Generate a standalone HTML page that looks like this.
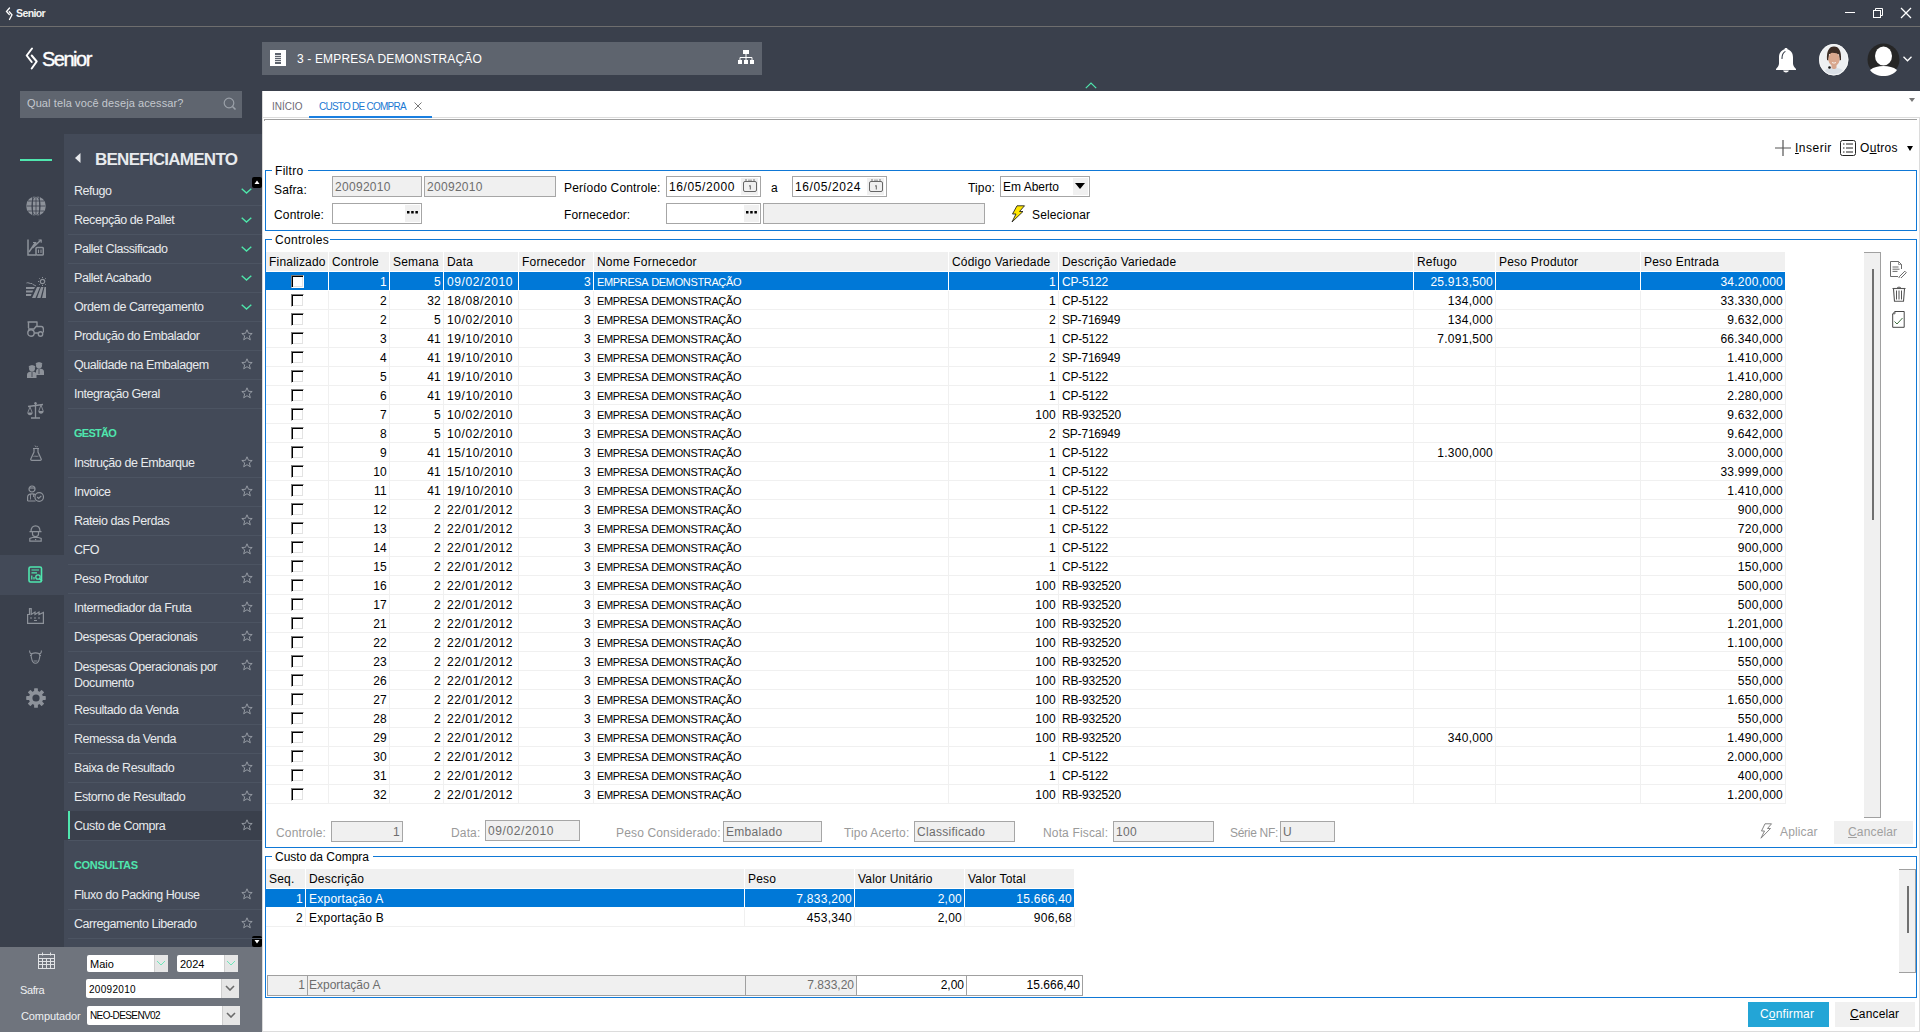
<!DOCTYPE html><html><head><meta charset="utf-8"><style>
*{box-sizing:border-box;margin:0;padding:0}
html,body{width:1920px;height:1032px;overflow:hidden}
body{background:#3a404c;font-family:"Liberation Sans",sans-serif;position:relative;color:#000}
.a{position:absolute}
.t{position:absolute;white-space:nowrap}
.mi{position:absolute;left:64px;width:198px;height:29px}
.mi:after{content:'';position:absolute;left:4px;right:0;bottom:-1px;height:1px;background:#4c5462}
.mi span{position:absolute;left:10px;top:8px;font-size:12.5px;letter-spacing:-0.45px;color:#e8eaed;white-space:nowrap}
.mi svg{position:absolute;right:10px;top:9px}
.mi svg.st{right:9px;top:8px}
.mi svg.ck{right:10px;top:12px}
.mh{position:absolute;left:74px;font-size:11px;font-weight:bold;color:#4fe6ae;letter-spacing:-0.75px;margin-top:1px}
.g{font-size:12px;line-height:18px}
.row{position:absolute;left:266px;width:1520px;height:19px}
.c{position:absolute;top:0;height:19px;border-right:1px solid #f0f0f0;border-bottom:1px solid #f0f0f0;white-space:nowrap;overflow:hidden;padding:1px 2px 0 3px;font-size:12px;line-height:18px;letter-spacing:0.25px}
.dt{letter-spacing:0.6px}
.em{font-size:11px;letter-spacing:-0.35px;word-spacing:0.8px}
.cp{letter-spacing:-0.2px}
.r{text-align:right}
.sel .c{background:#0078d7;color:#fff;border-right:1px solid #fff;border-bottom:1px solid #fff}
.hd{position:absolute;top:252px;height:19px;background:#f0f0f0;border-right:1px solid #fff;font-size:12px;line-height:19px;padding:1px 0 0 3px;white-space:nowrap;letter-spacing:0.2px}
.cb{position:absolute;left:25px;top:3px;width:13px;height:13px;background:#fff;border-top:1px solid #7a7a7a;border-left:1px solid #7a7a7a;border-right:1px solid #fff;border-bottom:1px solid #fff;box-shadow:inset 1px 1px 0 #000,inset -1px -1px 0 #e3e3e3}
.inp{position:absolute;border:1px solid #a6a6a6;height:21px;font-size:12px;line-height:19px;padding:1px 0 0 2px;white-space:nowrap;overflow:hidden;letter-spacing:0.3px}
.dg{letter-spacing:0.6px}
.dis{background:#f0f0f0;color:#6d6d6d}
.lbl{position:absolute;font-size:12px;white-space:nowrap;letter-spacing:0.15px}
.fr{position:absolute;border:1px solid #0f78d6}
.ft{position:absolute;background:#fff;font-size:12px;padding:0 3px;line-height:14px;white-space:nowrap;letter-spacing:0.3px}
.k0{left:0px;width:63px}.k1{left:63px;width:61px}.k2{left:124px;width:54px}.k3{left:178px;width:75px}.k4{left:253px;width:75px}.k5{left:328px;width:355px}.k6{left:683px;width:110px}.k7{left:793px;width:355px}.k8{left:1148px;width:82px}.k9{left:1230px;width:145px}.k10{left:1375px;width:145px}</style></head><body>
<svg class="a" style="left:5px;top:7px" width="9" height="14" viewBox="0 0 9 14"><path d="M4.5 1 L1.5 4.5 L4.3 7.5 M4.3 4.8 L7 7.8 L4.5 12.5" fill="none" stroke="#fff" stroke-width="1.3" stroke-linecap="round"/></svg>
<div class="t" style="left:16px;top:7px;font-size:10.5px;font-weight:bold;color:#f4f4f4;letter-spacing:-0.6px">Senior</div>
<div class="a" style="left:0;top:26px;width:1920px;height:1px;background:#6e6e6e"></div>
<div class="a" style="left:1845px;top:12px;width:10px;height:1px;background:#fff"></div>
<svg class="a" style="left:1872px;top:7px" width="12" height="12" viewBox="0 0 12 12"><rect x="1.5" y="3.5" width="7" height="7" fill="none" stroke="#fff"/><path d="M3.5 3.5 V1.5 H10.5 V8.5 H8.5" fill="none" stroke="#fff"/></svg>
<svg class="a" style="left:1900px;top:7px" width="12" height="12" viewBox="0 0 12 12"><path d="M1 1 L11 11 M11 1 L1 11" stroke="#fff" stroke-width="1.3"/></svg>
<svg class="a" style="left:24px;top:46px" width="16" height="26" viewBox="0 0 16 26"><path d="M8 2.5 L2.7 9.5 L7.7 16 M7.7 9.5 L12.7 15.5 L7.7 22.5" fill="none" stroke="#fff" stroke-width="2" stroke-linecap="round" stroke-linejoin="round"/></svg>
<div class="t" style="left:42px;top:48px;font-size:20px;color:#fff;letter-spacing:-1.5px;-webkit-text-stroke:0.4px #fff">Senior</div>
<div class="a" style="left:20px;top:91px;width:222px;height:27px;background:#5f656f"></div>
<div class="t" style="left:27px;top:97px;font-size:11px;color:#c4c8ce;letter-spacing:0.1px">Qual tela você deseja acessar?</div>
<svg class="a" style="left:223px;top:97px" width="14" height="14" viewBox="0 0 14 14"><circle cx="6" cy="6" r="4.8" fill="none" stroke="#9aa0a8" stroke-width="1.2"/><path d="M9.5 9.5 L12.5 12.5" stroke="#9aa0a8" stroke-width="1.6"/></svg>
<div class="a" style="left:262px;top:42px;width:500px;height:33px;background:#5e646e"></div>
<svg class="a" style="left:270px;top:50px" width="16" height="16" viewBox="0 0 16 16"><rect width="16" height="16" fill="#fff"/><rect x="5" y="3" width="6" height="11" fill="#5d636d"/><path d="M5 5.5H11M5 7.5H11M5 9.5H11M5 11.5H11" stroke="#fff" stroke-width="0.8"/></svg>
<div class="t" style="left:297px;top:52px;font-size:12px;color:#fff;letter-spacing:0.15px">3 - EMPRESA DEMONSTRAÇÃO</div>
<svg class="a" style="left:738px;top:50px" width="16" height="15" viewBox="0 0 16 15"><rect x="5" y="0" width="6" height="4" fill="#fff"/><path d="M8 4V7.5M2 7.5H14M2 7.5V10M8 7.5V10M14 7.5V10" stroke="#fff" stroke-width="1"/><rect x="0" y="10" width="4" height="4" fill="#fff"/><rect x="6" y="10" width="4" height="4" fill="#fff"/><rect x="12" y="10" width="4" height="4" fill="#fff"/></svg>
<svg class="a" style="left:1775px;top:47px" width="22" height="26" viewBox="0 0 22 26"><path d="M11 1C12 1 12.5 1.5 12.5 2.3C16 3.3 18 6.5 18 10.5L18 16.5C18 18.5 19.5 20.5 21 22L21 23L1 23L1 22C2.5 20.5 4 18.5 4 16.5L4 10.5C4 6.5 6 3.3 9.5 2.3C9.5 1.5 10 1 11 1Z" fill="#fff"/><path d="M8.2 23.5H13.8C13.8 24.6 12.6 25.4 11 25.4C9.4 25.4 8.2 24.6 8.2 23.5Z" fill="#fff"/><path d="M7 11.5C7 8 8 5.8 10 4.6" fill="none" stroke="#3a404c" stroke-width="1.1" stroke-linecap="round"/></svg>
<svg class="a" style="left:1819px;top:44px" width="30" height="32" viewBox="0 0 30 32"><defs><clipPath id="av"><ellipse cx="14.7" cy="15.7" rx="14.6" ry="15.6"/></clipPath></defs><g clip-path="url(#av)"><rect width="30" height="32" fill="#eef0f2"/><path d="M8 16C7.5 7 10 2.5 15 2.5C20 2.5 22.5 7 22 16L20.5 16.5L20 10H10L9.5 16.5Z" fill="#3d2d25"/><ellipse cx="15" cy="15" rx="5.6" ry="7.2" fill="#d9a78d"/><path d="M9.5 9C11 6 13 5.5 15.5 5.8C18.5 6 20 8 20.5 11C18.5 9 15 8.5 9.5 9Z" fill="#3d2d25"/><path d="M12.5 20H17.5V25H12.5Z" fill="#d6a68e"/><path d="M3 32C4 26 8 24.5 12.5 24C14 25.5 16 25.5 17.5 24C22 24.5 25.5 26 27 32Z" fill="#d9dfe6"/><circle cx="10.5" cy="23.5" r="1.3" fill="#1a1a1a"/><path d="M13 18.5Q15 19.8 17 18.5" stroke="#fff" stroke-width="0.8" fill="none"/></g><ellipse cx="14.7" cy="15.7" rx="14.3" ry="15.3" fill="none" stroke="#fafafa" stroke-width="0.8"/></svg>
<svg class="a" style="left:1867px;top:43px" width="33" height="33" viewBox="0 0 33 33"><circle cx="16.5" cy="16.5" r="16" fill="#262626"/><ellipse cx="16.5" cy="13" rx="8.5" ry="9.5" fill="#fff"/><path d="M3 27 C7 24 11 23 16.5 23 C22 23 26 24 30 27 C27 31 22 33 16.5 33 C11 33 6 31 3 27Z" fill="#fff"/></svg>
<svg class="a" style="left:1903px;top:56px" width="9" height="6" viewBox="0 0 9 6"><path d="M0.5 0.8 L4.5 4.8 L8.5 0.8" fill="none" stroke="#fff" stroke-width="1.3"/></svg>
<svg class="a" style="left:1085px;top:82px" width="12" height="7" viewBox="0 0 12 7"><path d="M0.8 6.2 L6 1 L11.2 6.2" fill="none" stroke="#4fe6ae" stroke-width="1.2"/></svg>
<div class="a" style="left:64px;top:134px;width:198px;height:813px;background:#434a58"></div>
<div class="a" style="left:20px;top:159px;width:32px;height:2px;background:#4fe6ae"></div>
<svg class="a" style="left:75px;top:153px" width="6" height="10" viewBox="0 0 6 10"><path d="M5.5 0 L0 5 L5.5 10Z" fill="#e8eaed"/></svg>
<div class="t" style="left:95px;top:150px;font-size:17px;font-weight:bold;color:#e8eaed;letter-spacing:-0.75px">BENEFICIAMENTO</div>
<div class="a" style="left:252px;top:177px;width:10px;height:11px;background:#000;border-radius:2px"></div><svg class="a" style="left:254px;top:179px" width="6" height="6"><path d="M0.5 5 L3 1.5 L5.5 5Z" fill="#fff"/></svg>
<div class="a" style="left:252px;top:936px;width:10px;height:11px;background:#000;border-radius:2px"></div><svg class="a" style="left:254px;top:939px" width="6" height="6"><path d="M0.5 1 L3 4.5 L5.5 1Z" fill="#fff"/></svg>
<div class="mi" style="top:176px;height:29px"><span>Refugo</span><svg class="ck" width="11" height="6" viewBox="0 0 11 6"><path d="M0.7 0.7 L5.5 5 L10.3 0.7" fill="none" stroke="#4ee6aa" stroke-width="1.4"/></svg></div>
<div class="mi" style="top:205px;height:29px"><span>Recepção de Pallet</span><svg class="ck" width="11" height="6" viewBox="0 0 11 6"><path d="M0.7 0.7 L5.5 5 L10.3 0.7" fill="none" stroke="#4ee6aa" stroke-width="1.4"/></svg></div>
<div class="mi" style="top:234px;height:29px"><span>Pallet Classificado</span><svg class="ck" width="11" height="6" viewBox="0 0 11 6"><path d="M0.7 0.7 L5.5 5 L10.3 0.7" fill="none" stroke="#4ee6aa" stroke-width="1.4"/></svg></div>
<div class="mi" style="top:263px;height:29px"><span>Pallet Acabado</span><svg class="ck" width="11" height="6" viewBox="0 0 11 6"><path d="M0.7 0.7 L5.5 5 L10.3 0.7" fill="none" stroke="#4ee6aa" stroke-width="1.4"/></svg></div>
<div class="mi" style="top:292px;height:29px"><span>Ordem de Carregamento</span><svg class="ck" width="11" height="6" viewBox="0 0 11 6"><path d="M0.7 0.7 L5.5 5 L10.3 0.7" fill="none" stroke="#4ee6aa" stroke-width="1.4"/></svg></div>
<div class="mi" style="top:321px;height:29px"><span>Produção do Embalador</span><svg class="st" width="12" height="12" viewBox="0 0 12 12"><path d="M6 0.8 L7.5 4.3 L11.2 4.5 L8.3 6.9 L9.3 10.8 L6 8.7 L2.7 10.8 L3.7 6.9 L0.8 4.5 L4.5 4.3Z" fill="none" stroke="#9ca1a9" stroke-width="0.9"/></svg></div>
<div class="mi" style="top:350px;height:29px"><span>Qualidade na Embalagem</span><svg class="st" width="12" height="12" viewBox="0 0 12 12"><path d="M6 0.8 L7.5 4.3 L11.2 4.5 L8.3 6.9 L9.3 10.8 L6 8.7 L2.7 10.8 L3.7 6.9 L0.8 4.5 L4.5 4.3Z" fill="none" stroke="#9ca1a9" stroke-width="0.9"/></svg></div>
<div class="mi" style="top:379px;height:29px"><span>Integração Geral</span><svg class="st" width="12" height="12" viewBox="0 0 12 12"><path d="M6 0.8 L7.5 4.3 L11.2 4.5 L8.3 6.9 L9.3 10.8 L6 8.7 L2.7 10.8 L3.7 6.9 L0.8 4.5 L4.5 4.3Z" fill="none" stroke="#9ca1a9" stroke-width="0.9"/></svg></div>
<div class="mh" style="top:426px">GESTÃO</div>
<div class="mi" style="top:448px;height:29px"><span>Instrução de Embarque</span><svg class="st" width="12" height="12" viewBox="0 0 12 12"><path d="M6 0.8 L7.5 4.3 L11.2 4.5 L8.3 6.9 L9.3 10.8 L6 8.7 L2.7 10.8 L3.7 6.9 L0.8 4.5 L4.5 4.3Z" fill="none" stroke="#9ca1a9" stroke-width="0.9"/></svg></div>
<div class="mi" style="top:477px;height:29px"><span>Invoice</span><svg class="st" width="12" height="12" viewBox="0 0 12 12"><path d="M6 0.8 L7.5 4.3 L11.2 4.5 L8.3 6.9 L9.3 10.8 L6 8.7 L2.7 10.8 L3.7 6.9 L0.8 4.5 L4.5 4.3Z" fill="none" stroke="#9ca1a9" stroke-width="0.9"/></svg></div>
<div class="mi" style="top:506px;height:29px"><span>Rateio das Perdas</span><svg class="st" width="12" height="12" viewBox="0 0 12 12"><path d="M6 0.8 L7.5 4.3 L11.2 4.5 L8.3 6.9 L9.3 10.8 L6 8.7 L2.7 10.8 L3.7 6.9 L0.8 4.5 L4.5 4.3Z" fill="none" stroke="#9ca1a9" stroke-width="0.9"/></svg></div>
<div class="mi" style="top:535px;height:29px"><span>CFO</span><svg class="st" width="12" height="12" viewBox="0 0 12 12"><path d="M6 0.8 L7.5 4.3 L11.2 4.5 L8.3 6.9 L9.3 10.8 L6 8.7 L2.7 10.8 L3.7 6.9 L0.8 4.5 L4.5 4.3Z" fill="none" stroke="#9ca1a9" stroke-width="0.9"/></svg></div>
<div class="mi" style="top:564px;height:29px"><span>Peso Produtor</span><svg class="st" width="12" height="12" viewBox="0 0 12 12"><path d="M6 0.8 L7.5 4.3 L11.2 4.5 L8.3 6.9 L9.3 10.8 L6 8.7 L2.7 10.8 L3.7 6.9 L0.8 4.5 L4.5 4.3Z" fill="none" stroke="#9ca1a9" stroke-width="0.9"/></svg></div>
<div class="mi" style="top:593px;height:29px"><span>Intermediador da Fruta</span><svg class="st" width="12" height="12" viewBox="0 0 12 12"><path d="M6 0.8 L7.5 4.3 L11.2 4.5 L8.3 6.9 L9.3 10.8 L6 8.7 L2.7 10.8 L3.7 6.9 L0.8 4.5 L4.5 4.3Z" fill="none" stroke="#9ca1a9" stroke-width="0.9"/></svg></div>
<div class="mi" style="top:622px;height:29px"><span>Despesas Operacionais</span><svg class="st" width="12" height="12" viewBox="0 0 12 12"><path d="M6 0.8 L7.5 4.3 L11.2 4.5 L8.3 6.9 L9.3 10.8 L6 8.7 L2.7 10.8 L3.7 6.9 L0.8 4.5 L4.5 4.3Z" fill="none" stroke="#9ca1a9" stroke-width="0.9"/></svg></div>
<div class="mi" style="top:651px;height:44px"><span style="line-height:16px;top:8px">Despesas Operacionais por<br>Documento</span><svg class="st" width="12" height="12" viewBox="0 0 12 12"><path d="M6 0.8 L7.5 4.3 L11.2 4.5 L8.3 6.9 L9.3 10.8 L6 8.7 L2.7 10.8 L3.7 6.9 L0.8 4.5 L4.5 4.3Z" fill="none" stroke="#9ca1a9" stroke-width="0.9"/></svg></div>
<div class="mi" style="top:695px;height:29px"><span>Resultado da Venda</span><svg class="st" width="12" height="12" viewBox="0 0 12 12"><path d="M6 0.8 L7.5 4.3 L11.2 4.5 L8.3 6.9 L9.3 10.8 L6 8.7 L2.7 10.8 L3.7 6.9 L0.8 4.5 L4.5 4.3Z" fill="none" stroke="#9ca1a9" stroke-width="0.9"/></svg></div>
<div class="mi" style="top:724px;height:29px"><span>Remessa da Venda</span><svg class="st" width="12" height="12" viewBox="0 0 12 12"><path d="M6 0.8 L7.5 4.3 L11.2 4.5 L8.3 6.9 L9.3 10.8 L6 8.7 L2.7 10.8 L3.7 6.9 L0.8 4.5 L4.5 4.3Z" fill="none" stroke="#9ca1a9" stroke-width="0.9"/></svg></div>
<div class="mi" style="top:753px;height:29px"><span>Baixa de Resultado</span><svg class="st" width="12" height="12" viewBox="0 0 12 12"><path d="M6 0.8 L7.5 4.3 L11.2 4.5 L8.3 6.9 L9.3 10.8 L6 8.7 L2.7 10.8 L3.7 6.9 L0.8 4.5 L4.5 4.3Z" fill="none" stroke="#9ca1a9" stroke-width="0.9"/></svg></div>
<div class="mi" style="top:782px;height:29px"><span>Estorno de Resultado</span><svg class="st" width="12" height="12" viewBox="0 0 12 12"><path d="M6 0.8 L7.5 4.3 L11.2 4.5 L8.3 6.9 L9.3 10.8 L6 8.7 L2.7 10.8 L3.7 6.9 L0.8 4.5 L4.5 4.3Z" fill="none" stroke="#9ca1a9" stroke-width="0.9"/></svg></div>
<div class="mi" style="top:811px;height:29px;background:#3a404c;border-bottom-color:#3a404c"><span>Custo de Compra</span><svg class="st" width="12" height="12" viewBox="0 0 12 12"><path d="M6 0.8 L7.5 4.3 L11.2 4.5 L8.3 6.9 L9.3 10.8 L6 8.7 L2.7 10.8 L3.7 6.9 L0.8 4.5 L4.5 4.3Z" fill="none" stroke="#9ca1a9" stroke-width="0.9"/></svg></div>
<div class="a" style="left:68px;top:811px;width:2px;height:28px;background:#4fe6ae"></div>
<div class="mh" style="top:858px;letter-spacing:-0.35px">CONSULTAS</div>
<div class="mi" style="top:880px;height:29px"><span>Fluxo do Packing House</span><svg class="st" width="12" height="12" viewBox="0 0 12 12"><path d="M6 0.8 L7.5 4.3 L11.2 4.5 L8.3 6.9 L9.3 10.8 L6 8.7 L2.7 10.8 L3.7 6.9 L0.8 4.5 L4.5 4.3Z" fill="none" stroke="#9ca1a9" stroke-width="0.9"/></svg></div>
<div class="mi" style="top:909px;height:29px"><span>Carregamento Liberado</span><svg class="st" width="12" height="12" viewBox="0 0 12 12"><path d="M6 0.8 L7.5 4.3 L11.2 4.5 L8.3 6.9 L9.3 10.8 L6 8.7 L2.7 10.8 L3.7 6.9 L0.8 4.5 L4.5 4.3Z" fill="none" stroke="#9ca1a9" stroke-width="0.9"/></svg></div>
<div class="a" style="left:0;top:555px;width:64px;height:40px;background:#434a58"></div>
<svg class="a" style="left:26px;top:196px" width="20" height="20" viewBox="0 0 20 20"><circle cx="10" cy="10" r="9.8" fill="#8d929a"/><g fill="none" stroke="#3a404c" stroke-width="0.8"><ellipse cx="10" cy="10" rx="4.2" ry="9.8"/><path d="M10 0V20M0.5 10H19.5M2 5H18M2 15H18M6.5 1V19M13.5 1V19"/></g></svg>
<svg class="a" style="left:27px;top:239px" width="17" height="17" viewBox="0 0 17 17"><g fill="none" stroke="#8d929a" stroke-width="1.5"><path d="M1 0.5V16H9"/><path d="M2 13L8.5 3.5M5.5 9L14 1"/><path d="M6 3.5H8.8V6.3M11.5 1H14.2V3.7" stroke-width="1.2"/><rect x="9" y="8.5" width="7.3" height="7.5" rx="1"/><path d="M11.5 14V10.5M14 10.5V14" stroke-width="1.1"/></g></svg>
<svg class="a" style="left:26px;top:277px" width="20" height="21" viewBox="0 0 20 21"><g fill="none" stroke="#8d929a"><circle cx="16.5" cy="4.5" r="2.2" stroke-width="1.2"/><path d="M16.5 0V1M16.5 8V9M12 4.5H13M20 4.5H21M13.3 1.3L14 2M19 7L19.7 7.7M13.3 7.7L14 7M19 2L19.7 1.3" stroke-width="1"/><path d="M0.5 6C2 5 4 7 6 6.5C7 8 8.5 8 10 9" stroke-width="1"/></g><g fill="#8d929a"><path d="M0 10H9L8 12H0Z M0 13.5H7.2L6.3 15.5H0Z M0 17H5.6L4.8 19H0Z"/><path d="M6 21L11 10H14L9.5 21Z M11 21L15 10H17.5L14.5 21Z M16 21L18.5 10H20V21Z"/></g></svg>
<svg class="a" style="left:27px;top:321px" width="17" height="16" viewBox="0 0 17 16"><g fill="none" stroke="#8d929a" stroke-width="1.4"><path d="M0.5 1H10.5M1.5 1V7M10 1V5.5"/><path d="M7 12H11M1 8H7L9 5.5H14.5C16 5.5 16.5 7 16.5 9V11.5"/><circle cx="4" cy="12" r="3.2"/><circle cx="13.5" cy="13" r="2.2"/></g></svg>
<svg class="a" style="left:27px;top:361px" width="17" height="17" viewBox="0 0 17 17"><g fill="#8d929a"><circle cx="5" cy="7.5" r="3"/><path d="M1.5 6.3C1.5 3.5 8.5 3.5 8.5 6.3Z"/><path d="M0 17V13.5C0 11.5 2 10.5 5 10.5C8 10.5 9.5 11.5 9.5 13.5V17Z"/><circle cx="12" cy="4.5" r="3"/><path d="M8.5 3.3C8.5 0.5 15.5 0.5 15.5 3.3Z"/><path d="M9 14V10.5C9 8.5 10 7.5 12 7.5C15 7.5 17 8.5 17 10.5V14Z"/></g><path d="M5 11V16M12 8V13" stroke="#3a404c" stroke-width="0.8"/></svg>
<svg class="a" style="left:27px;top:402px" width="17" height="17" viewBox="0 0 17 17"><g fill="none" stroke="#8d929a" stroke-width="1.3"><path d="M8.5 1V15.5M4 16H13M1 4.5L16 2.5"/><path d="M3 5L0.8 10.5M3 5L5.2 10.5M14 3L11.8 9M14 3L16.2 9" stroke-width="0.9"/></g><g fill="#8d929a"><path d="M0.3 10.5H5.7C5.5 12.5 4.5 13.2 3 13.2C1.5 13.2 0.5 12.5 0.3 10.5Z"/><path d="M11.3 9H16.7C16.5 11 15.5 11.7 14 11.7C12.5 11.7 11.5 11 11.3 9Z"/><rect x="7.3" y="0" width="2.4" height="2.4" rx="1.2"/></g></svg>
<svg class="a" style="left:30px;top:445px" width="12" height="16" viewBox="0 0 12 16"><g fill="none" stroke="#8d929a" stroke-width="1.2"><path d="M3 3.5H9M4 3.5V7L0.8 14C0.5 14.8 1 15.3 1.8 15.3H10.2C11 15.3 11.5 14.8 11.2 14L8 7V3.5"/><path d="M3.5 11.5C5 10.5 7 12 8.5 11" stroke-width="0.9"/><path d="M5 0.5L6 2M7.3 1L7 2.3" stroke-width="0.9"/></g></svg>
<svg class="a" style="left:27px;top:485px" width="17" height="17" viewBox="0 0 17 17"><g fill="none" stroke="#8d929a" stroke-width="1.2"><circle cx="5" cy="4" r="3"/><path d="M0.6 16V12C0.6 9.8 2.5 8.8 5 8.8C6.8 8.8 8 9.2 8.8 10M0.6 16H8.5"/><path d="M3.5 9V14.5M6.5 9V12" stroke-width="0.9"/><circle cx="12.2" cy="12" r="4.3"/><path d="M10.2 12L11.7 13.5L14.3 10.8"/></g><path d="M2 3H8" stroke="#8d929a" stroke-width="1.2"/></svg>
<svg class="a" style="left:29px;top:525px" width="13" height="17" viewBox="0 0 13 17"><g fill="none" stroke="#8d929a" stroke-width="1.2"><path d="M2 6.5C2 2.5 4 0.8 6.5 0.8C9 0.8 11 2.5 11 6.5M0.5 6.7H12.5"/><path d="M3.5 7V9C3.5 10.5 5 11.5 6.5 11.5C8 11.5 9.5 10.5 9.5 9V7"/><path d="M0.8 16.2V13.5L3.5 12.5H9.5L12.2 13.5V16.2Z"/></g><rect x="6" y="14" width="1.2" height="1.2" fill="#8d929a"/></svg>
<svg class="a" style="left:28px;top:566px" width="15" height="17" viewBox="0 0 15 17"><g fill="none" stroke="#4fe6ae" stroke-width="1.6"><rect x="1" y="1" width="12.5" height="15" rx="1.5"/><path d="M3.5 4H11M3.5 6.8H9" stroke-width="1.2"/><path d="M3.8 13.5V9.5M6 13.5V11" stroke-width="1.2"/><circle cx="10" cy="11" r="2.2" stroke-width="1.3"/><path d="M11.5 12.5L14 15" stroke-width="1.5"/></g></svg>
<svg class="a" style="left:27px;top:608px" width="17" height="16" viewBox="0 0 17 16"><g fill="none" stroke="#8d929a" stroke-width="1.2"><path d="M0.6 15.4V6.5H2.5V0.6H4.2V6.5L8 4V6.5L12 4V6.5L16.4 4.5V15.4Z"/><path d="M3 10H5M7 10H9M11 10H13M7 12.5H10" stroke-width="1"/></g></svg>
<svg class="a" style="left:29px;top:650px" width="13" height="14" viewBox="0 0 13 14"><g fill="none" stroke="#8d929a" stroke-width="1.1"><path d="M0.6 0.5C0.5 3 1.5 4 3.5 4M12.4 0.5C12.5 3 11.5 4 9.5 4"/><path d="M3 3.5C2 4 2 6 2.5 8C3 11 4.5 13.3 6.5 13.3C8.5 13.3 10 11 10.5 8C11 6 11 4 10 3.5C8 2.8 5 2.8 3 3.5Z"/><path d="M4.5 11H8.5" stroke-width="0.9"/><path d="M1 5.5H2.5M10.5 5.5H12" stroke-width="1"/></g></svg>
<svg class="a" style="left:26px;top:688px" width="20" height="20" viewBox="0 0 20 20"><g fill="#8d929a"><circle cx="10" cy="10" r="7.2"/><rect x="8.1" y="0.2" width="3.8" height="4" rx="0.6" transform="rotate(0 10 10)"/><rect x="8.1" y="0.2" width="3.8" height="4" rx="0.6" transform="rotate(45 10 10)"/><rect x="8.1" y="0.2" width="3.8" height="4" rx="0.6" transform="rotate(90 10 10)"/><rect x="8.1" y="0.2" width="3.8" height="4" rx="0.6" transform="rotate(135 10 10)"/><rect x="8.1" y="0.2" width="3.8" height="4" rx="0.6" transform="rotate(180 10 10)"/><rect x="8.1" y="0.2" width="3.8" height="4" rx="0.6" transform="rotate(225 10 10)"/><rect x="8.1" y="0.2" width="3.8" height="4" rx="0.6" transform="rotate(270 10 10)"/><rect x="8.1" y="0.2" width="3.8" height="4" rx="0.6" transform="rotate(315 10 10)"/></g><circle cx="10" cy="10" r="3.6" fill="#3a404c"/></svg>
<div class="a" style="left:0;top:947px;width:262px;height:85px;background:#6f747d"></div>
<svg class="a" style="left:38px;top:952px" width="17" height="17" viewBox="0 0 17 17"><rect x="0.5" y="2.5" width="16" height="14" fill="none" stroke="#e0e2e5"/><path d="M0.5 6.5H16.5M0.5 9.5H16.5M0.5 12.5H16.5M4.5 6.5V16.5M8.5 6.5V16.5M12.5 6.5V16.5M4.5 0.5V3.5M12.5 0.5V3.5" stroke="#e0e2e5"/></svg>
<div class="a" style="left:87px;top:955px;width:81px;height:17px;background:#fff;border-radius:2px"></div>
<div class="t" style="left:90px;top:958px;font-size:11px;color:#000">Maio</div>
<div class="a" style="left:154px;top:955px;width:14px;height:17px;background:#e6e6e6;border-left:1px solid #cfcfcf"></div>
<svg class="a" style="left:156px;top:960px" width="10" height="6" viewBox="0 0 10 6"><path d="M1 1L5 5L9 1" fill="none" stroke="#4fe6ae" stroke-width="0.8"/></svg>
<div class="a" style="left:177px;top:955px;width:61px;height:17px;background:#fff;border-radius:2px"></div>
<div class="t" style="left:180px;top:958px;font-size:11px;color:#000">2024</div>
<div class="a" style="left:224px;top:955px;width:14px;height:17px;background:#e6e6e6;border-left:1px solid #cfcfcf"></div>
<svg class="a" style="left:226px;top:960px" width="10" height="6" viewBox="0 0 10 6"><path d="M1 1L5 5L9 1" fill="none" stroke="#4fe6ae" stroke-width="0.8"/></svg>
<div class="a" style="left:86px;top:979px;width:153px;height:19px;background:#fff;border-radius:2px"></div>
<div class="t" style="left:89px;top:982px;font-size:11px;color:#000"><span style="font-size:10px;letter-spacing:0.3px;position:relative;top:1px">20092010</span></div>
<div class="a" style="left:221px;top:979px;width:18px;height:19px;background:#e6e6e6;border-left:1px solid #cfcfcf"></div>
<svg class="a" style="left:225px;top:985px" width="10" height="6" viewBox="0 0 10 6"><path d="M1 1L5 5L9 1" fill="none" stroke="#6a6a6a" stroke-width="1.6"/></svg>
<div class="a" style="left:87px;top:1006px;width:153px;height:19px;background:#fff;border-radius:2px"></div>
<div class="t" style="left:90px;top:1009px;font-size:11px;color:#000"><span style="font-size:10px;letter-spacing:-0.6px">NEO-DESENV02</span></div>
<div class="a" style="left:222px;top:1006px;width:18px;height:19px;background:#e6e6e6;border-left:1px solid #cfcfcf"></div>
<svg class="a" style="left:226px;top:1012px" width="10" height="6" viewBox="0 0 10 6"><path d="M1 1L5 5L9 1" fill="none" stroke="#6a6a6a" stroke-width="1.6"/></svg>
<div class="t" style="left:20px;top:984px;font-size:11px;color:#eef0f2;letter-spacing:-0.4px">Safra</div>
<div class="t" style="left:21px;top:1010px;font-size:11px;color:#eef0f2;letter-spacing:-0.1px">Computador</div>
<div class="a" style="left:262px;top:91px;width:1658px;height:941px;background:#fff"></div>
<div class="a" style="left:262px;top:91px;width:1px;height:941px;background:#d9d9d9"></div>
<div class="t" style="left:272px;top:101px;font-size:10px;color:#6e6a74;letter-spacing:0px">INÍCIO</div>
<div class="t" style="left:319px;top:101px;font-size:10px;color:#1a78d2;letter-spacing:-0.75px">CUSTO DE COMPRA</div>
<svg class="a" style="left:414px;top:102px" width="8" height="8" viewBox="0 0 8 8"><path d="M0.5 0.5L7.5 7.5M7.5 0.5L0.5 7.5" stroke="#777" stroke-width="1"/></svg>
<div class="a" style="left:263px;top:117px;width:1657px;height:1px;background:#dcdcdc"></div>
<div class="a" style="left:309px;top:116px;width:123px;height:2px;background:#1a7fe0"></div>
<div class="a" style="left:1909px;top:98px;width:0;height:0;border-left:3.5px solid transparent;border-right:3.5px solid transparent;border-top:4px solid #777"></div>
<div class="a" style="left:264px;top:119px;width:1653px;height:1px;background:#a0a0a0"></div>
<div class="a" style="left:264px;top:119px;width:1px;height:2px;background:#a0a0a0"></div>
<div class="a" style="left:1919px;top:117px;width:1px;height:915px;background:#dcdcdc"></div>
<svg class="a" style="left:1775px;top:140px" width="16" height="16" viewBox="0 0 16 16"><path d="M8 0V16M0 8H16" stroke="#555" stroke-width="1.2"/></svg>
<div class="t" style="left:1795px;top:141px;font-size:12px;color:#000;letter-spacing:0.5px"><u>I</u>nserir</div>
<svg class="a" style="left:1840px;top:140px" width="16" height="16" viewBox="0 0 16 16"><rect x="0.5" y="0.5" width="15" height="15" rx="2" fill="none" stroke="#222"/><path d="M3 4H4.5M3 8H4.5M3 12H4.5M6 4H13M6 8H13M6 12H13" stroke="#222"/></svg>
<div class="t" style="left:1860px;top:141px;font-size:12px;color:#000;letter-spacing:0.3px">O<u>u</u>tros</div>
<div class="a" style="left:1907px;top:146px;width:0;height:0;border-left:3.5px solid transparent;border-right:3.5px solid transparent;border-top:5px solid #000"></div>
<div class="fr" style="left:265px;top:170px;width:1652px;height:61px"></div>
<div class="ft" style="left:272px;top:164px;width:36px;letter-spacing:0.3px">Filtro</div>
<div class="lbl" style="left:274px;top:183px">Safra:</div>
<div class="inp dis" style="left:332px;top:176px;width:90px">20092010</div>
<div class="inp dis" style="left:424px;top:176px;width:132px">20092010</div>
<div class="lbl" style="left:274px;top:208px">Controle:</div>
<div class="inp" style="left:332px;top:203px;width:90px"></div>
<div class="a" style="left:405px;top:205px;width:15px;height:17px;background:#f0f0f0"></div>
<svg class="a" style="left:407px;top:211px" width="11" height="3"><rect x="0" y="0" width="2.5" height="2.5" fill="#000"/><rect x="4.2" y="0" width="2.5" height="2.5" fill="#000"/><rect x="8.4" y="0" width="2.5" height="2.5" fill="#000"/></svg>
<div class="lbl" style="left:564px;top:181px">Período Controle:</div>
<div class="inp dg" style="left:666px;top:176px;width:95px">16/05/2000</div>
<div class="a" style="left:741px;top:178px;width:17px;height:17px;background:#f0f0f0"></div>
<svg class="a" style="left:743px;top:179px" width="14" height="13" viewBox="0 0 14 13"><rect x="0.5" y="2.5" width="13" height="10" rx="1.5" fill="none" stroke="#666"/><path d="M3 0V2M6 0.5V2M8 0.5V2M11 0V2" stroke="#777" stroke-width="1"/><path d="M6 7.2L7.3 6.5V10.5" stroke="#555" stroke-width="0.9" fill="none"/></svg>
<div class="lbl" style="left:771px;top:181px">a</div>
<div class="inp dg" style="left:792px;top:176px;width:95px">16/05/2024</div>
<div class="a" style="left:867px;top:178px;width:17px;height:17px;background:#f0f0f0"></div>
<svg class="a" style="left:869px;top:179px" width="14" height="13" viewBox="0 0 14 13"><rect x="0.5" y="2.5" width="13" height="10" rx="1.5" fill="none" stroke="#666"/><path d="M3 0V2M6 0.5V2M8 0.5V2M11 0V2" stroke="#777" stroke-width="1"/><path d="M6 7.2L7.3 6.5V10.5" stroke="#555" stroke-width="0.9" fill="none"/></svg>
<div class="lbl" style="left:968px;top:181px">Tipo:</div>
<div class="inp" style="left:1000px;top:176px;width:90px;letter-spacing:0">Em Aberto</div>
<div class="a" style="left:1073px;top:178px;width:15px;height:17px;background:#f0f0f0"></div>
<div class="a" style="left:1075px;top:183px;width:0;height:0;border-left:5px solid transparent;border-right:5px solid transparent;border-top:6px solid #000"></div>
<div class="lbl" style="left:564px;top:208px">Fornecedor:</div>
<div class="inp" style="left:666px;top:203px;width:95px"></div>
<div class="a" style="left:744px;top:205px;width:15px;height:17px;background:#f0f0f0"></div>
<svg class="a" style="left:746px;top:211px" width="11" height="3"><rect x="0" y="0" width="2.5" height="2.5" fill="#000"/><rect x="4.2" y="0" width="2.5" height="2.5" fill="#000"/><rect x="8.4" y="0" width="2.5" height="2.5" fill="#000"/></svg>
<div class="inp dis" style="left:763px;top:203px;width:222px"></div>
<svg class="a" style="left:1010px;top:205px" width="16" height="18" viewBox="0 0 16 18"><path d="M7 0.8 L14.5 0.8 L9.5 6.5 L13 6.5 L2 17 L6 9 L2.5 9Z" fill="#ffe600" stroke="#222" stroke-width="0.9" stroke-linejoin="round"/></svg>
<div class="lbl" style="left:1032px;top:208px">Selecionar</div>
<div class="fr" style="left:265px;top:239px;width:1652px;height:609px"></div>
<div class="ft" style="left:272px;top:233px;width:58px;letter-spacing:0.3px">Controles</div>
<div class="hd" style="left:266px;width:63px">Finalizado</div>
<div class="hd" style="left:329px;width:61px">Controle</div>
<div class="hd" style="left:390px;width:54px">Semana</div>
<div class="hd" style="left:444px;width:75px">Data</div>
<div class="hd" style="left:519px;width:75px">Fornecedor</div>
<div class="hd" style="left:594px;width:355px">Nome Fornecedor</div>
<div class="hd" style="left:949px;width:110px">Código Variedade</div>
<div class="hd" style="left:1059px;width:355px">Descrição Variedade</div>
<div class="hd" style="left:1414px;width:82px">Refugo</div>
<div class="hd" style="left:1496px;width:145px">Peso Produtor</div>
<div class="hd" style="left:1641px;width:145px">Peso Entrada</div>
<div class="row sel" style="top:272px"><div class="c k0 "><div class="cb"></div></div><div class="c k1 r">1</div><div class="c k2 r">5</div><div class="c k3 dt">09/02/2010</div><div class="c k4 r">3</div><div class="c k5 em">EMPRESA DEMONSTRAÇÃO</div><div class="c k6 r">1</div><div class="c k7 cp">CP-5122</div><div class="c k8 r">25.913,500</div><div class="c k9 r"></div><div class="c k10 r">34.200,000</div></div>
<div class="row" style="top:291px"><div class="c k0 "><div class="cb"></div></div><div class="c k1 r">2</div><div class="c k2 r">32</div><div class="c k3 dt">18/08/2010</div><div class="c k4 r">3</div><div class="c k5 em">EMPRESA DEMONSTRAÇÃO</div><div class="c k6 r">1</div><div class="c k7 cp">CP-5122</div><div class="c k8 r">134,000</div><div class="c k9 r"></div><div class="c k10 r">33.330,000</div></div>
<div class="row" style="top:310px"><div class="c k0 "><div class="cb"></div></div><div class="c k1 r">2</div><div class="c k2 r">5</div><div class="c k3 dt">10/02/2010</div><div class="c k4 r">3</div><div class="c k5 em">EMPRESA DEMONSTRAÇÃO</div><div class="c k6 r">2</div><div class="c k7 cp">SP-716949</div><div class="c k8 r">134,000</div><div class="c k9 r"></div><div class="c k10 r">9.632,000</div></div>
<div class="row" style="top:329px"><div class="c k0 "><div class="cb"></div></div><div class="c k1 r">3</div><div class="c k2 r">41</div><div class="c k3 dt">19/10/2010</div><div class="c k4 r">3</div><div class="c k5 em">EMPRESA DEMONSTRAÇÃO</div><div class="c k6 r">1</div><div class="c k7 cp">CP-5122</div><div class="c k8 r">7.091,500</div><div class="c k9 r"></div><div class="c k10 r">66.340,000</div></div>
<div class="row" style="top:348px"><div class="c k0 "><div class="cb"></div></div><div class="c k1 r">4</div><div class="c k2 r">41</div><div class="c k3 dt">19/10/2010</div><div class="c k4 r">3</div><div class="c k5 em">EMPRESA DEMONSTRAÇÃO</div><div class="c k6 r">2</div><div class="c k7 cp">SP-716949</div><div class="c k8 r"></div><div class="c k9 r"></div><div class="c k10 r">1.410,000</div></div>
<div class="row" style="top:367px"><div class="c k0 "><div class="cb"></div></div><div class="c k1 r">5</div><div class="c k2 r">41</div><div class="c k3 dt">19/10/2010</div><div class="c k4 r">3</div><div class="c k5 em">EMPRESA DEMONSTRAÇÃO</div><div class="c k6 r">1</div><div class="c k7 cp">CP-5122</div><div class="c k8 r"></div><div class="c k9 r"></div><div class="c k10 r">1.410,000</div></div>
<div class="row" style="top:386px"><div class="c k0 "><div class="cb"></div></div><div class="c k1 r">6</div><div class="c k2 r">41</div><div class="c k3 dt">19/10/2010</div><div class="c k4 r">3</div><div class="c k5 em">EMPRESA DEMONSTRAÇÃO</div><div class="c k6 r">1</div><div class="c k7 cp">CP-5122</div><div class="c k8 r"></div><div class="c k9 r"></div><div class="c k10 r">2.280,000</div></div>
<div class="row" style="top:405px"><div class="c k0 "><div class="cb"></div></div><div class="c k1 r">7</div><div class="c k2 r">5</div><div class="c k3 dt">10/02/2010</div><div class="c k4 r">3</div><div class="c k5 em">EMPRESA DEMONSTRAÇÃO</div><div class="c k6 r">100</div><div class="c k7 cp">RB-932520</div><div class="c k8 r"></div><div class="c k9 r"></div><div class="c k10 r">9.632,000</div></div>
<div class="row" style="top:424px"><div class="c k0 "><div class="cb"></div></div><div class="c k1 r">8</div><div class="c k2 r">5</div><div class="c k3 dt">10/02/2010</div><div class="c k4 r">3</div><div class="c k5 em">EMPRESA DEMONSTRAÇÃO</div><div class="c k6 r">2</div><div class="c k7 cp">SP-716949</div><div class="c k8 r"></div><div class="c k9 r"></div><div class="c k10 r">9.642,000</div></div>
<div class="row" style="top:443px"><div class="c k0 "><div class="cb"></div></div><div class="c k1 r">9</div><div class="c k2 r">41</div><div class="c k3 dt">15/10/2010</div><div class="c k4 r">3</div><div class="c k5 em">EMPRESA DEMONSTRAÇÃO</div><div class="c k6 r">1</div><div class="c k7 cp">CP-5122</div><div class="c k8 r">1.300,000</div><div class="c k9 r"></div><div class="c k10 r">3.000,000</div></div>
<div class="row" style="top:462px"><div class="c k0 "><div class="cb"></div></div><div class="c k1 r">10</div><div class="c k2 r">41</div><div class="c k3 dt">15/10/2010</div><div class="c k4 r">3</div><div class="c k5 em">EMPRESA DEMONSTRAÇÃO</div><div class="c k6 r">1</div><div class="c k7 cp">CP-5122</div><div class="c k8 r"></div><div class="c k9 r"></div><div class="c k10 r">33.999,000</div></div>
<div class="row" style="top:481px"><div class="c k0 "><div class="cb"></div></div><div class="c k1 r">11</div><div class="c k2 r">41</div><div class="c k3 dt">19/10/2010</div><div class="c k4 r">3</div><div class="c k5 em">EMPRESA DEMONSTRAÇÃO</div><div class="c k6 r">1</div><div class="c k7 cp">CP-5122</div><div class="c k8 r"></div><div class="c k9 r"></div><div class="c k10 r">1.410,000</div></div>
<div class="row" style="top:500px"><div class="c k0 "><div class="cb"></div></div><div class="c k1 r">12</div><div class="c k2 r">2</div><div class="c k3 dt">22/01/2012</div><div class="c k4 r">3</div><div class="c k5 em">EMPRESA DEMONSTRAÇÃO</div><div class="c k6 r">1</div><div class="c k7 cp">CP-5122</div><div class="c k8 r"></div><div class="c k9 r"></div><div class="c k10 r">900,000</div></div>
<div class="row" style="top:519px"><div class="c k0 "><div class="cb"></div></div><div class="c k1 r">13</div><div class="c k2 r">2</div><div class="c k3 dt">22/01/2012</div><div class="c k4 r">3</div><div class="c k5 em">EMPRESA DEMONSTRAÇÃO</div><div class="c k6 r">1</div><div class="c k7 cp">CP-5122</div><div class="c k8 r"></div><div class="c k9 r"></div><div class="c k10 r">720,000</div></div>
<div class="row" style="top:538px"><div class="c k0 "><div class="cb"></div></div><div class="c k1 r">14</div><div class="c k2 r">2</div><div class="c k3 dt">22/01/2012</div><div class="c k4 r">3</div><div class="c k5 em">EMPRESA DEMONSTRAÇÃO</div><div class="c k6 r">1</div><div class="c k7 cp">CP-5122</div><div class="c k8 r"></div><div class="c k9 r"></div><div class="c k10 r">900,000</div></div>
<div class="row" style="top:557px"><div class="c k0 "><div class="cb"></div></div><div class="c k1 r">15</div><div class="c k2 r">2</div><div class="c k3 dt">22/01/2012</div><div class="c k4 r">3</div><div class="c k5 em">EMPRESA DEMONSTRAÇÃO</div><div class="c k6 r">1</div><div class="c k7 cp">CP-5122</div><div class="c k8 r"></div><div class="c k9 r"></div><div class="c k10 r">150,000</div></div>
<div class="row" style="top:576px"><div class="c k0 "><div class="cb"></div></div><div class="c k1 r">16</div><div class="c k2 r">2</div><div class="c k3 dt">22/01/2012</div><div class="c k4 r">3</div><div class="c k5 em">EMPRESA DEMONSTRAÇÃO</div><div class="c k6 r">100</div><div class="c k7 cp">RB-932520</div><div class="c k8 r"></div><div class="c k9 r"></div><div class="c k10 r">500,000</div></div>
<div class="row" style="top:595px"><div class="c k0 "><div class="cb"></div></div><div class="c k1 r">17</div><div class="c k2 r">2</div><div class="c k3 dt">22/01/2012</div><div class="c k4 r">3</div><div class="c k5 em">EMPRESA DEMONSTRAÇÃO</div><div class="c k6 r">100</div><div class="c k7 cp">RB-932520</div><div class="c k8 r"></div><div class="c k9 r"></div><div class="c k10 r">500,000</div></div>
<div class="row" style="top:614px"><div class="c k0 "><div class="cb"></div></div><div class="c k1 r">21</div><div class="c k2 r">2</div><div class="c k3 dt">22/01/2012</div><div class="c k4 r">3</div><div class="c k5 em">EMPRESA DEMONSTRAÇÃO</div><div class="c k6 r">100</div><div class="c k7 cp">RB-932520</div><div class="c k8 r"></div><div class="c k9 r"></div><div class="c k10 r">1.201,000</div></div>
<div class="row" style="top:633px"><div class="c k0 "><div class="cb"></div></div><div class="c k1 r">22</div><div class="c k2 r">2</div><div class="c k3 dt">22/01/2012</div><div class="c k4 r">3</div><div class="c k5 em">EMPRESA DEMONSTRAÇÃO</div><div class="c k6 r">100</div><div class="c k7 cp">RB-932520</div><div class="c k8 r"></div><div class="c k9 r"></div><div class="c k10 r">1.100,000</div></div>
<div class="row" style="top:652px"><div class="c k0 "><div class="cb"></div></div><div class="c k1 r">23</div><div class="c k2 r">2</div><div class="c k3 dt">22/01/2012</div><div class="c k4 r">3</div><div class="c k5 em">EMPRESA DEMONSTRAÇÃO</div><div class="c k6 r">100</div><div class="c k7 cp">RB-932520</div><div class="c k8 r"></div><div class="c k9 r"></div><div class="c k10 r">550,000</div></div>
<div class="row" style="top:671px"><div class="c k0 "><div class="cb"></div></div><div class="c k1 r">26</div><div class="c k2 r">2</div><div class="c k3 dt">22/01/2012</div><div class="c k4 r">3</div><div class="c k5 em">EMPRESA DEMONSTRAÇÃO</div><div class="c k6 r">100</div><div class="c k7 cp">RB-932520</div><div class="c k8 r"></div><div class="c k9 r"></div><div class="c k10 r">550,000</div></div>
<div class="row" style="top:690px"><div class="c k0 "><div class="cb"></div></div><div class="c k1 r">27</div><div class="c k2 r">2</div><div class="c k3 dt">22/01/2012</div><div class="c k4 r">3</div><div class="c k5 em">EMPRESA DEMONSTRAÇÃO</div><div class="c k6 r">100</div><div class="c k7 cp">RB-932520</div><div class="c k8 r"></div><div class="c k9 r"></div><div class="c k10 r">1.650,000</div></div>
<div class="row" style="top:709px"><div class="c k0 "><div class="cb"></div></div><div class="c k1 r">28</div><div class="c k2 r">2</div><div class="c k3 dt">22/01/2012</div><div class="c k4 r">3</div><div class="c k5 em">EMPRESA DEMONSTRAÇÃO</div><div class="c k6 r">100</div><div class="c k7 cp">RB-932520</div><div class="c k8 r"></div><div class="c k9 r"></div><div class="c k10 r">550,000</div></div>
<div class="row" style="top:728px"><div class="c k0 "><div class="cb"></div></div><div class="c k1 r">29</div><div class="c k2 r">2</div><div class="c k3 dt">22/01/2012</div><div class="c k4 r">3</div><div class="c k5 em">EMPRESA DEMONSTRAÇÃO</div><div class="c k6 r">100</div><div class="c k7 cp">RB-932520</div><div class="c k8 r">340,000</div><div class="c k9 r"></div><div class="c k10 r">1.490,000</div></div>
<div class="row" style="top:747px"><div class="c k0 "><div class="cb"></div></div><div class="c k1 r">30</div><div class="c k2 r">2</div><div class="c k3 dt">22/01/2012</div><div class="c k4 r">3</div><div class="c k5 em">EMPRESA DEMONSTRAÇÃO</div><div class="c k6 r">1</div><div class="c k7 cp">CP-5122</div><div class="c k8 r"></div><div class="c k9 r"></div><div class="c k10 r">2.000,000</div></div>
<div class="row" style="top:766px"><div class="c k0 "><div class="cb"></div></div><div class="c k1 r">31</div><div class="c k2 r">2</div><div class="c k3 dt">22/01/2012</div><div class="c k4 r">3</div><div class="c k5 em">EMPRESA DEMONSTRAÇÃO</div><div class="c k6 r">1</div><div class="c k7 cp">CP-5122</div><div class="c k8 r"></div><div class="c k9 r"></div><div class="c k10 r">400,000</div></div>
<div class="row" style="top:785px"><div class="c k0 "><div class="cb"></div></div><div class="c k1 r">32</div><div class="c k2 r">2</div><div class="c k3 dt">22/01/2012</div><div class="c k4 r">3</div><div class="c k5 em">EMPRESA DEMONSTRAÇÃO</div><div class="c k6 r">100</div><div class="c k7 cp">RB-932520</div><div class="c k8 r"></div><div class="c k9 r"></div><div class="c k10 r">1.200,000</div></div>
<div class="a" style="left:1864px;top:252px;width:17px;height:566px;background:#f0f0f0;border-top:1px solid #a0a0a0;border-right:1px solid #a0a0a0;border-bottom:1px solid #a0a0a0"></div>
<div class="a" style="left:1872px;top:269px;width:2px;height:251px;background:#707070"></div>
<svg class="a" style="left:1890px;top:261px" width="17" height="17" viewBox="0 0 17 17"><g fill="none" stroke="#5a5a5a" stroke-width="0.9"><path d="M11.5 8V3.5L8.5 0.5H0.5V15.5H8"/><path d="M8.5 0.5V3.5H11.5" stroke-width="0.6"/><path d="M2.5 6H8.5M2.5 8.2H9.5M2.5 10.4H7.5"/><path d="M9.2 15.8L14.8 10.2L16.3 11.7L10.7 17.3L8.8 17.6Z"/></g></svg>
<svg class="a" style="left:1892px;top:286px" width="14" height="16" viewBox="0 0 14 16"><g fill="none" stroke="#555"><path d="M0.5 2.5H13.5" stroke-width="1.1"/><path d="M5 2.2C5 0.8 9 0.8 9 2.2" stroke-width="1"/><path d="M1.5 3L2.5 15.3H11.5L12.5 3" stroke-width="1.1"/><path d="M4.5 4.5V13.5M7 4.5V13.5M9.5 4.5V13.5" stroke-width="1"/></g></svg>
<svg class="a" style="left:1892px;top:311px" width="13" height="17" viewBox="0 0 13 17"><g fill="none" stroke="#333" stroke-width="0.9"><path d="M3 0.5H12.2V16.3H0.7V2.8Z"/><path d="M3 0.5V2.8H0.7" stroke-width="0.7"/></g><path d="M2.5 10.5L5 13L10.5 7" fill="none" stroke="#3f6f3f" stroke-width="1"/></svg>
<div class="lbl" style="left:276px;top:826px;color:#9a9a9a">Controle:</div>
<div class="inp dis" style="left:331px;top:821px;width:72px;text-align:right;padding-right:2px">1</div>
<div class="lbl" style="left:451px;top:826px;color:#9a9a9a">Data:</div>
<div class="inp dis dg" style="left:485px;top:820px;width:95px">09/02/2010</div>
<div class="lbl" style="left:616px;top:826px;color:#9a9a9a">Peso Considerado:</div>
<div class="inp dis" style="left:723px;top:821px;width:99px">Embalado</div>
<div class="lbl" style="left:844px;top:826px;color:#9a9a9a">Tipo Acerto:</div>
<div class="inp dis" style="left:914px;top:821px;width:101px">Classificado</div>
<div class="lbl" style="left:1043px;top:826px;color:#9a9a9a">Nota Fiscal:</div>
<div class="inp dis" style="left:1113px;top:821px;width:101px">100</div>
<div class="lbl" style="left:1230px;top:826px;color:#9a9a9a;letter-spacing:-0.3px">Série NF:</div>
<div class="inp dis" style="left:1280px;top:821px;width:55px">U</div>
<svg class="a" style="left:1759px;top:823px" width="14" height="16" viewBox="0 0 14 16"><path d="M6 0.8L12.5 0.8L8.5 5.5L11.5 5.5L2 15.2L5.5 8L2.5 8Z" fill="none" stroke="#777" stroke-width="0.9" stroke-linejoin="round"/></svg>
<div class="lbl" style="left:1780px;top:825px;color:#a0a0a0">Aplicar</div>
<div class="a" style="left:1834px;top:821px;width:79px;height:23px;background:#f0f0f0"></div>
<div class="lbl" style="left:1848px;top:825px;color:#a0a0a0"><u>C</u>ancelar</div>
<div class="fr" style="left:265px;top:856px;width:1652px;height:142px"></div>
<div class="ft" style="left:272px;top:850px;width:101px;letter-spacing:0px">Custo da Compra</div>
<div class="hd" style="top:869px;left:266px;width:40px">Seq.</div>
<div class="hd" style="top:869px;left:306px;width:439px">Descrição</div>
<div class="hd" style="top:869px;left:745px;width:110px">Peso</div>
<div class="hd" style="top:869px;left:855px;width:110px">Valor Unitário</div>
<div class="hd" style="top:869px;left:965px;width:110px">Valor Total</div>
<div class="row sel" style="top:889px;width:809px"><div class="c r" style="left:0px;width:40px">1</div><div class="c " style="left:40px;width:439px">Exportação A</div><div class="c r" style="left:479px;width:110px">7.833,200</div><div class="c r" style="left:589px;width:110px">2,00</div><div class="c r" style="left:699px;width:110px">15.666,40</div></div>
<div class="row" style="top:908px;width:809px"><div class="c r" style="left:0px;width:40px">2</div><div class="c " style="left:40px;width:439px">Exportação B</div><div class="c r" style="left:479px;width:110px">453,340</div><div class="c r" style="left:589px;width:110px">2,00</div><div class="c r" style="left:699px;width:110px">906,68</div></div>
<div class="a" style="left:267px;top:975px;width:816px;height:21px;border:1px solid #a0a0a0;background:#f0f0f0"></div>
<div class="a" style="left:307px;top:975px;width:1px;height:21px;background:#a0a0a0"></div>
<div class="a" style="left:745px;top:975px;width:1px;height:21px;background:#a0a0a0"></div>
<div class="a" style="left:856px;top:975px;width:1px;height:21px;background:#a0a0a0"></div>
<div class="a" style="left:966px;top:975px;width:1px;height:21px;background:#a0a0a0"></div>
<div class="a" style="left:857px;top:976px;width:225px;height:19px;background:#fff"></div>
<div class="a" style="left:966px;top:975px;width:1px;height:21px;background:#a0a0a0"></div>
<div class="t g r" style="left:268px;top:976px;width:37px;color:#6d6d6d;text-align:right">1</div>
<div class="t g" style="left:309px;top:976px;color:#6d6d6d">Exportação A</div>
<div class="t g" style="left:746px;top:976px;width:109px;color:#6d6d6d;text-align:right;padding-right:1px">7.833,20</div>
<div class="t g" style="left:857px;top:976px;width:108px;text-align:right;padding-right:1px">2,00</div>
<div class="t g" style="left:967px;top:976px;width:114px;text-align:right;padding-right:1px">15.666,40</div>
<div class="a" style="left:1899px;top:869px;width:17px;height:104px;background:#f0f0f0;border-top:1px solid #a0a0a0;border-bottom:1px solid #a0a0a0;border-right:1px solid #a0a0a0"></div>
<div class="a" style="left:1907px;top:886px;width:2px;height:47px;background:#707070"></div>
<div class="a" style="left:1748px;top:1002px;width:81px;height:25px;background:#23a5d6"></div>
<div class="lbl" style="left:1760px;top:1007px;color:#fff">C<u>o</u>nfirmar</div>
<div class="a" style="left:1835px;top:1002px;width:80px;height:25px;background:#f0f0f0"></div>
<div class="lbl" style="left:1850px;top:1007px;color:#000"><u>C</u>ancelar</div>
<div class="a" style="left:262px;top:1031px;width:1658px;height:1px;background:#dcdcdc"></div>
</body></html>
